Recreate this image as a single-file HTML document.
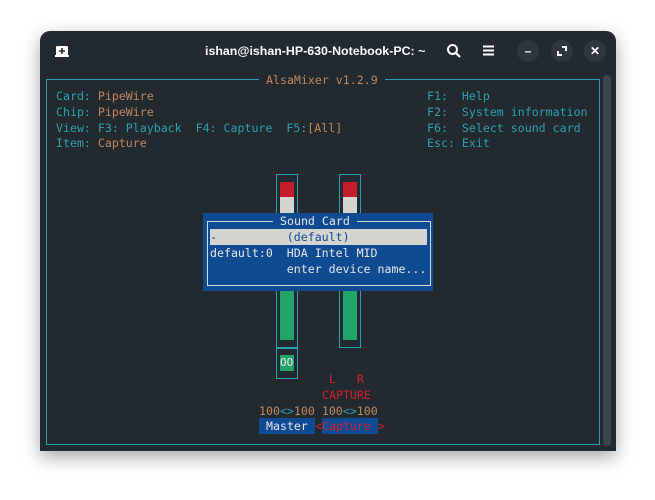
<!DOCTYPE html>
<html><head><meta charset="utf-8"><style>
*{margin:0;padding:0;box-sizing:border-box}
body{width:655px;height:500px;background:#fff;position:relative;overflow:hidden;font-family:"DejaVu Sans Mono","Liberation Mono",monospace;font-size:11.6px}
.win{position:absolute;left:40px;top:31px;width:576px;height:420px;background:#222a30;border-radius:10px 10px 0 0;box-shadow:0 6px 18px rgba(0,0,0,.35)}
.t{position:absolute;white-space:pre;line-height:15.7px;height:15.7px}
.c{color:#2aa1b3}.o{color:#c0875a}.r{color:#d02030}.w{color:#e8e8e8}
.box{position:absolute;border:1.5px solid #2aa1b3}
.blk{position:absolute}
.btn{position:absolute;top:40px;width:22px;height:22px;border-radius:50%;background:#2e373d;color:#fff;font-family:"Liberation Sans",sans-serif;font-weight:bold;text-align:center;line-height:22px;font-size:12px}
</style></head><body>
<div class="win"></div>
<!-- titlebar -->
<svg style="position:absolute;left:55px;top:44px" width="14" height="14"><rect x="1" y="2" width="12" height="10" rx="1.5" fill="#fff"/><rect x="0" y="11" width="14" height="2" fill="#fff"/><path d="M7 4v6M4 7h6" stroke="#222a30" stroke-width="1.6"/></svg>
<div style="position:absolute;left:205px;top:44px;font-family:'Liberation Sans',sans-serif;font-size:12.4px;font-weight:bold;color:#fff">ishan@ishan-HP-630-Notebook-PC: ~</div>
<svg style="position:absolute;left:446px;top:43px" width="16" height="16"><circle cx="6.5" cy="6.5" r="4.5" stroke="#fff" stroke-width="2" fill="none"/><path d="M10 10l4 4" stroke="#fff" stroke-width="2.2"/></svg>
<svg style="position:absolute;left:483px;top:45px" width="12" height="12"><path d="M0 1.5h11M0 5.5h11M0 9.5h11" stroke="#fff" stroke-width="2"/></svg>
<div class="btn" style="left:517px">–</div>
<div class="btn" style="left:551px"><svg width="22" height="22"><path d="M11 7h4v4M11 15H7v-4" stroke="#fff" stroke-width="2" fill="none"/></svg></div>
<div class="btn" style="left:584px">✕</div>
<!-- scrollbar -->
<div style="position:absolute;left:603px;top:75px;width:8px;height:371px;border-radius:4px;background:#3a464d"></div>
<!-- outer frame -->
<div class="box" style="left:46px;top:79px;width:554px;height:366px"></div>
<div class="t o" style="left:259px;top:73px;background:#222a30;padding:0 7px">AlsaMixer v1.2.9</div>
<div class="t c" style="left:56px;top:89px">Card: <span class="o">PipeWire</span></div>
<div class="t c" style="left:56px;top:105px">Chip: <span class="o">PipeWire</span></div>
<div class="t c" style="left:56px;top:121px">View: F3: Playback  F4: Capture  F5:<span class="o">[All]</span></div>
<div class="t c" style="left:56px;top:136px">Item: <span class="o">Capture</span></div>
<div class="t c" style="left:427px;top:89px">F1:  Help</div>
<div class="t c" style="left:427px;top:105px">F2:  System information</div>
<div class="t c" style="left:427px;top:121px">F6:  Select sound card</div>
<div class="t c" style="left:427px;top:136px">Esc: Exit</div>
<!-- sliders -->
<div class="box" style="left:276px;top:174px;width:22px;height:205px"></div>
<div style="position:absolute;left:277px;top:347px;width:20px;height:1.5px;background:#2aa1b3"></div>
<div class="blk" style="left:280px;top:182px;width:14px;height:15px;background:#c41e2e"></div>
<div class="blk" style="left:280px;top:197px;width:14px;height:17px;background:#d4d4d0"></div>
<div class="blk" style="left:280px;top:290px;width:14px;height:50px;background:#22a468"></div>
<div class="t" style="left:280px;top:355px;width:14px;background:#22a468;color:#e8e8e8;font-size:11px">OO</div>
<div class="box" style="left:339px;top:174px;width:22px;height:174px"></div>
<div class="blk" style="left:343px;top:182px;width:14px;height:15px;background:#c41e2e"></div>
<div class="blk" style="left:343px;top:197px;width:14px;height:17px;background:#d4d4d0"></div>
<div class="blk" style="left:343px;top:290px;width:14px;height:50px;background:#22a468"></div>
<!-- popup -->
<div class="blk" style="left:203px;top:213px;width:230px;height:78px;background:#0e4b92"></div>
<div style="position:absolute;left:207px;top:221px;width:224px;height:65px;border:1.5px solid #d8d8d8"></div>
<div class="t w" style="left:273px;top:214px;background:#0e4b92;padding:0 7px">Sound Card</div>
<div class="blk" style="left:210px;top:229px;width:217px;height:16px;background:#d4d4d0"></div>
<div class="t" style="left:210px;top:230px;color:#0e4b92">-          (default)</div>
<div class="t w" style="left:210px;top:246px">default:0  HDA Intel MID</div>
<div class="t w" style="left:210px;top:262px">           enter device name...</div>
<!-- labels -->
<div class="t r" style="left:329px;top:372px">L   R</div>
<div class="t r" style="left:322px;top:388px">CAPTURE</div>
<div class="t o" style="left:259px;top:404px">100<span class="c">&lt;&gt;</span>100 100<span class="c">&lt;&gt;</span>100</div>
<div class="blk" style="left:259px;top:418px;width:56px;height:16px;background:#0e4b92"></div>
<div class="t w" style="left:266px;top:419px">Master</div>
<div class="blk" style="left:322px;top:418px;width:56px;height:16px;background:#0e4b92"></div>
<div class="t r" style="left:315px;top:419px">&lt;Capture &gt;</div>
</body></html>
